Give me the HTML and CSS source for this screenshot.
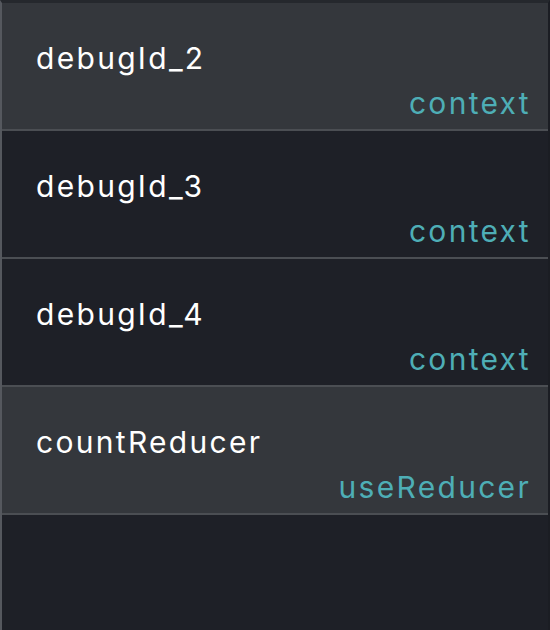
FILE: index.html
```html
<!DOCTYPE html>
<html>
<head>
<meta charset="utf-8">
<link rel="stylesheet" href="styles.css">
</head>
<body>
<div class="panel">
  <div class="row light"><div class="name">debugId_2</div><div class="type">context</div></div>
  <div class="row dark"><div class="name">debugId_3</div><div class="type">context</div></div>
  <div class="row dark"><div class="name">debugId_4</div><div class="type">context</div></div>
  <div class="row light"><div class="name">countReducer</div><div class="type">useReducer</div></div>
</div>
</body>
</html>
```
FILE: styles.css
```css
html, body {
  margin: 0;
  padding: 0;
  background: #1e2027;
}
.panel {
  width: 546px;
  height: 627px;
  border-left: 2px solid #55585e;
  border-right: 2px solid #1b1d23;
  border-top: 3px solid #25282d;
  background: #1e2027;
  font-family: "Inter", "Open Sans", sans-serif;
}
.row {
  height: 126px;
  border-bottom: 2px solid #4b4e53;
  display: flex;
  flex-direction: column;
  padding: 0 19px 0 34px;
}
.light { background: #34373c; }
.dark { background: #1e2027; }
.name {
  margin-top: 37px;
  line-height: 36px;
  font-size: 30px;
  letter-spacing: 2.3px;
  color: #ffffff;
}
.type {
  margin-top: 9px;
  line-height: 36px;
  font-size: 30px;
  letter-spacing: 2.3px;
  color: #4eaeb6;
  text-align: right;
  margin-right: -2px;
}
```
